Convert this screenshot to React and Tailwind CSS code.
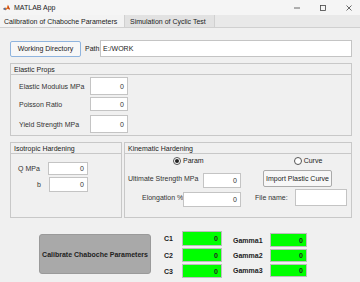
import React from "react";

function Field({ className = "", value = "0", green = false }) {
  return (
    <div
      className={
        "flex items-center justify-end pr-[3px] border " +
        (green
          ? "bg-[#00ff00] border-[#bdbdbd] font-bold text-[#222]"
          : "bg-white border-[#c4c4c4] text-[#333]") +
        " " +
        className
      }
    >
      {value}
    </div>
  );
}

function Panel({ title, className = "", children }) {
  return (
    <div className={"flex flex-col border border-[#c8c8c8] " + className}>
      <div className="h-[11px] flex items-center pl-[3px] border-b border-[#c8c8c8] text-[#222]">
        {title}
      </div>
      <div className="flex-1 relative">{children}</div>
    </div>
  );
}

function Radio({ checked, label }) {
  return (
    <div className="flex items-center gap-[2px]">
      <div className="w-[8px] h-[8px] rounded-full border border-[#555] bg-white flex items-center justify-center">
        {checked && <div className="w-[4px] h-[4px] rounded-full bg-[#222]" />}
      </div>
      <span className="text-[#222]">{label}</span>
    </div>
  );
}

export default function App() {
  return (
    <div
      className="w-[360px] h-[282px] bg-[#f0f0f0] flex flex-col overflow-hidden text-[7px] text-[#333] leading-none whitespace-nowrap"
      style={{ fontFamily: '"Liberation Sans", Arial, sans-serif' }}
    >
      {/* title bar */}
      <div className="h-[15px] bg-[#f5f5f5] flex items-center">
        <svg className="ml-[3px]" width="7" height="7" viewBox="0 0 10 10">
          <path d="M0 7 L3 5 L5 6 L7 1 L10 8 L6 7 L4 9 Z" fill="#e8701a" />
          <path d="M0 7 L3 5 L4 9 Z" fill="#3b6fb6" />
          <path d="M7 1 L10 8 L8 7 Z" fill="#b0301c" />
        </svg>
        <span className="ml-[4px] text-[#222]">MATLAB App</span>
        <div className="ml-auto flex items-center">
          <svg width="6" height="6" viewBox="0 0 6 6" className="mr-[20px]">
            <line x1="0" y1="3" x2="6" y2="3" stroke="#444" strokeWidth="0.8" />
          </svg>
          <svg width="6" height="6" viewBox="0 0 6 6" className="mr-[20px]">
            <rect x="0.5" y="0.5" width="5" height="5" fill="none" stroke="#444" strokeWidth="0.8" />
          </svg>
          <svg width="6" height="6" viewBox="0 0 6 6" className="mr-[8px]">
            <path d="M0.5 0.5 L5.5 5.5 M5.5 0.5 L0.5 5.5" stroke="#444" strokeWidth="0.8" />
          </svg>
        </div>
      </div>

      {/* tabs */}
      <div className="h-[13px] bg-[#e9e9e9] flex border-b border-[#d0d0d0]">
        <div className="w-[125px] bg-[#f3f3f3] border-r border-[#d0d0d0] flex items-center pl-[4px] text-[#222]">
          Calibration of Chaboche Parameters
        </div>
        <div className="w-[90px] bg-[#e2e2e2] border-r border-[#d0d0d0] flex items-center pl-[5px] text-[#222]">
          Simulation of Cyclic Test
        </div>
      </div>

      {/* content */}
      <div className="flex-1 flex flex-col pl-[10px] pr-[8px]">
        <div className="mt-[12px] flex items-center h-[17px]">
          <div className="w-[71px] h-[16px] rounded-[2px] border border-[#8fb4de] bg-[#f7f7f7] flex items-center justify-center text-[#222]">
            Working Directory
          </div>
          <span className="ml-[4px] w-[15px] text-[#222]">Path:</span>
          <div className="flex-1 h-[17px] bg-white border border-[#c4c4c4] flex items-center pl-[2px] text-[#222]">
            E:/WORK
          </div>
        </div>

        <Panel title="Elastic Props" className="mt-[6px] h-[73px]">
          <div className="flex flex-col pl-[8px] pt-[2px]">
            <div className="flex items-center h-[18px]">
              <span className="w-[71px]">Elastic Modulus MPa</span>
              <Field className="w-[38px] h-[18px]" />
            </div>
            <div className="flex items-center h-[14px] mt-[2px]">
              <span className="w-[71px]">Poisson Ratio</span>
              <Field className="w-[38px] h-[14px]" />
            </div>
            <div className="flex items-center h-[18px] mt-[4px]">
              <span className="w-[71px]">Yield Strength MPa</span>
              <Field className="w-[38px] h-[18px]" />
            </div>
          </div>
        </Panel>

        <div className="mt-[6px] h-[76px] flex gap-[2px]">
          <Panel title="Isotropic Hardening" className="w-[112px]">
            <div className="flex flex-col pt-[8px]">
              <div className="flex items-center h-[13px]">
                <span className="ml-[7px] w-[30px]">Q MPa</span>
                <Field className="w-[40px] h-[13px]" />
              </div>
              <div className="flex items-center h-[15px] mt-[2px]">
                <span className="ml-[26px] w-[12px]">b</span>
                <Field className="w-[39px] h-[15px]" />
              </div>
            </div>
          </Panel>

          <Panel title="Kinematic Hardening" className="flex-1">
            <div className="flex flex-col">
              <div className="h-[11px] mt-[1px] flex items-center">
                <div className="ml-[48px]">
                  <Radio checked label="Param" />
                </div>
                <div className="ml-[90px]">
                  <Radio label="Curve" />
                </div>
              </div>
              <div className="flex items-center h-[19px] mt-[3px]">
                <span className="ml-[3px] w-[75px]">Ultimate Strength MPa</span>
                <Field className="w-[38px] h-[15px] mt-[4px]" />
                <div className="ml-[22px] w-[69px] h-[17px] rounded-[2px] border border-[#aaa] bg-[#f7f7f7] flex items-center justify-center text-[#222]">
                  Import Plastic Curve
                </div>
              </div>
              <div className="flex items-center h-[19px]">
                <span className="ml-[17px] w-[41px]">Elongation %</span>
                <Field className="w-[58px] h-[15px] mt-[4px]" />
                <span className="ml-[14px] w-[40px]">File name:</span>
                <div className="w-[52px] h-[17px] bg-white border border-[#c4c4c4]" />
              </div>
            </div>
          </Panel>
        </div>

        {/* bottom */}
        <div className="flex mt-[13px]">
          <div className="mt-[3px] ml-[29px] w-[112px] h-[40px] rounded-[3px] bg-[#a9a9a9] border border-[#9a9a9a] flex items-center justify-center font-bold text-[#222]">
            Calibrate Chaboche Parameters
          </div>
          <div className="ml-[13px] flex flex-col font-bold text-[#222]">
            <div className="flex items-center h-[15px]">
              <span className="w-[18px]">C1</span>
              <Field green className="w-[40px] h-[15px]" />
            </div>
            <div className="flex items-center h-[14px] mt-[2px]">
              <span className="w-[18px]">C2</span>
              <Field green className="w-[40px] h-[14px]" />
            </div>
            <div className="flex items-center h-[14px] mt-[2px]">
              <span className="w-[18px]">C3</span>
              <Field green className="w-[40px] h-[14px]" />
            </div>
          </div>
          <div className="ml-[11px] mt-[2px] flex flex-col font-bold text-[#222]">
            <div className="flex items-center h-[14px]">
              <span className="w-[37px]">Gamma1</span>
              <Field green className="w-[37px] h-[14px]" />
            </div>
            <div className="flex items-center h-[13px] mt-[2px]">
              <span className="w-[37px]">Gamma2</span>
              <Field green className="w-[37px] h-[13px]" />
            </div>
            <div className="flex items-center h-[13px] mt-[2px]">
              <span className="w-[37px]">Gamma3</span>
              <Field green className="w-[37px] h-[13px]" />
            </div>
          </div>
        </div>
      </div>
    </div>
  );
}
